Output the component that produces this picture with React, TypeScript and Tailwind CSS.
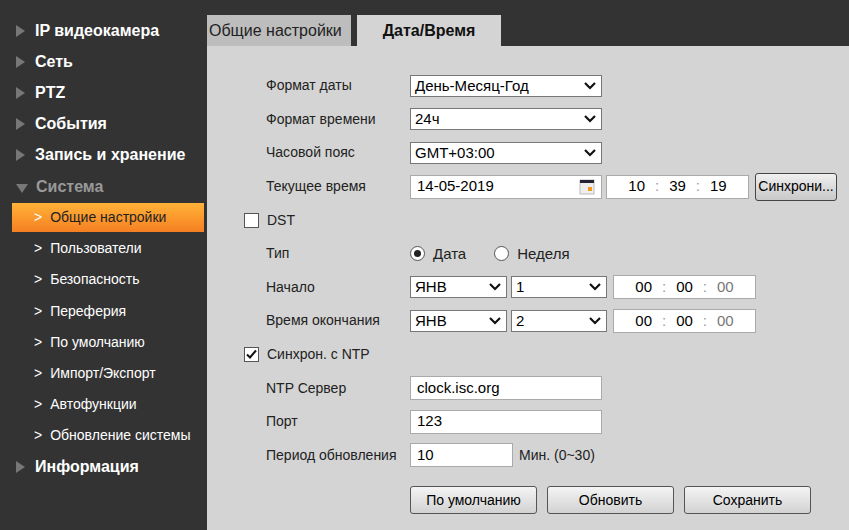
import React from "react";

const Tri = ({ down }: { down?: boolean }) => (
  <span className={`inline-block w-0 h-0 ${down ? "border-l-[6px] border-r-[6px] border-t-[9px] border-l-transparent border-r-transparent border-t-[#777] mt-1" : "border-t-[6px] border-b-[6px] border-l-[9px] border-t-transparent border-b-transparent border-l-[#777]"}`} />
);

const Chev = () => (
  <svg width="14" height="10" viewBox="0 0 14 10"><path d="M2 2l5 5 5-5" stroke="#111" strokeWidth="2.2" fill="none" /></svg>
);

const Select = ({ v, w }: { v: string; w: string }) => (
  <div className={`${w} h-[22px] bg-white border border-[#777] flex items-center justify-between pl-1 pr-1 text-[15px] text-black`}>
    <span>{v}</span><Chev />
  </div>
);

const Input = ({ v, w }: { v: string; w: string }) => (
  <div className={`${w} h-[24px] bg-white border border-[#aaa] flex items-center px-1.5 text-[15px] text-black`}>{v}</div>
);

const Time = ({ a, b, c, gray }: { a: string; b: string; c: string; gray?: boolean }) => (
  <div className="w-[143px] h-[24px] bg-white border border-[#aaa] flex items-center justify-center gap-[10px] text-[15px] text-black">
    <span>{a}</span><span className="text-[#999]">:</span><span>{b}</span><span className="text-[#999]">:</span><span className={gray ? "text-[#777]" : ""}>{c}</span>
  </div>
);

const Row = ({ label, children }: { label?: string; children?: React.ReactNode }) => (
  <div className="h-[33.6px] flex items-center">
    <div className="w-[144px] text-[14px] text-[#222]">{label}</div>
    <div className="flex items-center">{children}</div>
  </div>
);

const Btn = ({ t, w }: { t: string; w: string }) => (
  <div className={`${w} h-[28px] border border-[#555] rounded-[3px] bg-gradient-to-b from-[#f4f4f4] to-[#d2d2d2] flex items-center justify-center text-[14px] text-black`}>{t}</div>
);

export default function App() {
  const top = ["IP видеокамера", "Сеть", "PTZ", "События", "Запись и хранение"];
  const sub = ["Пользователи", "Безопасность", "Переферия", "По умолчанию", "Импорт/Экспорт", "Автофункции", "Обновление системы"];
  return (
    <div className="w-[849px] h-[530px] bg-[#333333] flex overflow-hidden" style={{ fontFamily: "Arial, 'Liberation Sans', sans-serif" }}>
      <div className="w-[207px] pt-[15px] shrink-0">
        {top.map((t) => (
          <div key={t} className="h-[31.2px] flex items-center gap-[10px] pl-[16px] text-white font-bold text-[16px]"><Tri />{t}</div>
        ))}
        <div className="h-[31.2px] flex items-center gap-[8px] pl-[16px] text-[#999] font-bold text-[16px]"><Tri down />Система</div>
        <div className="ml-[12px] w-[192px] h-[29px] my-[1px] bg-gradient-to-b from-[#ffb238] to-[#f57f22] flex items-center pl-[22px] gap-[8px] text-[14px] text-[#222]">
          <span className="text-white">&gt;</span>Общие настройки
        </div>
        {sub.map((t) => (
          <div key={t} className="h-[31.2px] flex items-center pl-[34px] gap-[8px] text-[14px] text-white"><span>&gt;</span>{t}</div>
        ))}
        <div className="h-[31.2px] flex items-center gap-[10px] pl-[16px] text-white font-bold text-[16px]"><Tri />Информация</div>
      </div>
      <div className="flex-1 flex flex-col pt-[15px]">
        <div className="flex h-[31px] items-end">
          <div className="w-[144px] h-[31px] bg-[#bdbdbd] flex items-center pl-[2px] text-[16px] text-[#222]">Общие настройки</div>
          <div className="w-[144px] h-[31px] bg-[#d4d4d4] ml-[6px] flex items-center justify-center font-bold text-[16px] text-[#111]">Дата/Время</div>
        </div>
        <div className="flex-1 bg-[#d4d4d4] pl-[59px] pt-[23px]">
          <Row label="Формат даты"><Select v="День-Месяц-Год" w="w-[192px]" /></Row>
          <Row label="Формат времени"><Select v="24ч" w="w-[192px]" /></Row>
          <Row label="Часовой пояс"><Select v="GMT+03:00" w="w-[192px]" /></Row>
          <Row label="Текущее время">
            <div className="w-[192px] h-[24px] bg-white border border-[#aaa] flex items-center justify-between px-1.5 text-[15px] text-black">
              <span>14-05-2019</span>
              <svg width="16" height="16" viewBox="0 0 16 16"><rect x="1" y="1" width="14" height="14" fill="#eee" stroke="#bbb" /><rect x="1" y="1" width="14" height="3" fill="#223" /><rect x="9" y="8" width="4" height="4" fill="#f39a1e" /></svg>
            </div>
            <div className="ml-[4px]"><Time a="10" b="39" c="19" /></div>
            <div className="ml-[6px] w-[82px] h-[28px] border border-[#444] rounded-[3px] bg-gradient-to-b from-[#f0f0f0] to-[#c8c8c8] flex items-center justify-center text-[14px] text-black">Синхрони...</div>
          </Row>
          <div className="h-[33.6px] flex items-center -ml-[22px] gap-[8px] text-[14px] text-[#222]">
            <div className="w-[15px] h-[15px] bg-white border border-[#555]" />DST
          </div>
          <Row label="Тип">
            <div className="flex items-center gap-[8px] text-[15px] text-[#222]">
              <div className="w-[15px] h-[15px] rounded-full border border-[#555] bg-white flex items-center justify-center"><div className="w-[7px] h-[7px] rounded-full bg-[#222]" /></div>Дата
              <div className="ml-[20px] w-[15px] h-[15px] rounded-full border border-[#555] bg-white" />Неделя
            </div>
          </Row>
          <Row label="Начало">
            <Select v="ЯНВ" w="w-[97px]" /><div className="ml-[4px]"><Select v="1" w="w-[96px]" /></div><div className="ml-[6px]"><Time a="00" b="00" c="00" gray /></div>
          </Row>
          <Row label="Время окончания">
            <Select v="ЯНВ" w="w-[97px]" /><div className="ml-[4px]"><Select v="2" w="w-[96px]" /></div><div className="ml-[6px]"><Time a="00" b="00" c="00" gray /></div>
          </Row>
          <div className="h-[33.6px] flex items-center -ml-[22px] gap-[8px] text-[14px] text-[#222]">
            <div className="w-[15px] h-[15px] bg-white border border-[#555] flex items-center justify-center">
              <svg width="13" height="13" viewBox="0 0 13 13"><path d="M2 6.5l3 3 6-7" stroke="#111" strokeWidth="2" fill="none" /></svg>
            </div>Синхрон. с NTP
          </div>
          <Row label="NTP Сервер"><Input v="clock.isc.org" w="w-[192px]" /></Row>
          <Row label="Порт"><Input v="123" w="w-[192px]" /></Row>
          <Row label="Период обновления"><Input v="10" w="w-[103px]" /><span className="ml-[6px] text-[14px] text-[#222]">Мин. (0~30)</span></Row>
          <div className="flex gap-[10px] ml-[144px] mt-[14px]">
            <Btn t="По умолчанию" w="w-[127px]" />
            <Btn t="Обновить" w="w-[127px]" />
            <Btn t="Сохранить" w="w-[127px]" />
          </div>
        </div>
      </div>
    </div>
  );
}
